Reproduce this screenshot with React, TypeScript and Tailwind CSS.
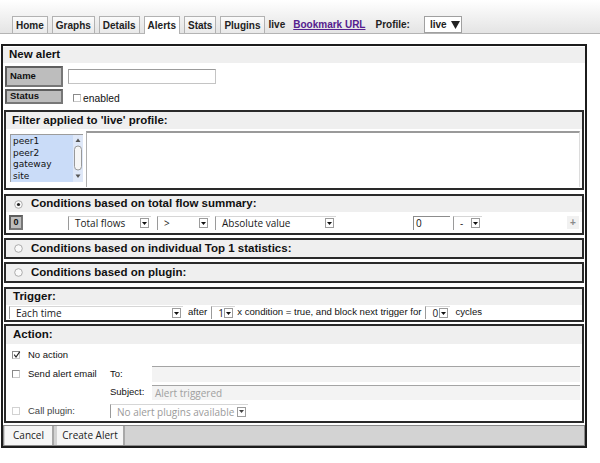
import clsx from 'clsx'
import type { ReactNode } from 'react'

// small control font (Lucida Grande look-alike)
const ctrl = "font-['Open_Sans',sans-serif] text-[10px]"

function Arrow({ disabled }: { disabled?: boolean }) {
  return (
    <span className="flex h-[10px] w-[9px] shrink-0 items-center justify-center border border-[#9c9c9c] bg-white">
      <svg width="5" height="3" viewBox="0 0 5 3">
        <path d="M0 0h5L2.5 3z" fill={disabled ? '#444' : '#111'} />
      </svg>
    </span>
  )
}

function Select({ className, children, disabled }: { className: string; children: ReactNode; disabled?: boolean }) {
  return (
    <div
      className={clsx(
        'flex shrink-0 items-center border-l border-t border-l-[#9a9a9a] border-t-[#d6d6d6] bg-white pl-[6px] pr-[2px]',
        ctrl,
        disabled ? 'text-[#9a9a9a]' : 'text-[#1a1a1a]',
        className,
      )}
    >
      <span className="flex-1 whitespace-nowrap leading-[12px]">{children}</span>
      <Arrow disabled={disabled} />
    </div>
  )
}

function Check({ checked, disabled }: { checked?: boolean; disabled?: boolean }) {
  return (
    <span
      className={clsx(
        'relative block h-[8px] w-[8px] shrink-0 border bg-white',
        disabled ? 'border-[#d2d2d2]' : 'border-[#8a8a8a] border-r-[#c8c8c8] border-b-[#c8c8c8]',
      )}
    >
      {checked && (
        <svg className="absolute left-0 top-[-1px]" width="8" height="8" viewBox="0 0 8 8">
          <path d="M1.2 3.6 L3 6 L6.8 0.6" fill="none" stroke="#222" strokeWidth="1.1" />
        </svg>
      )}
    </span>
  )
}

function Radio({ checked }: { checked?: boolean }) {
  return (
    <svg width="9" height="9" viewBox="0 0 9 9" className="shrink-0">
      <circle cx="4.5" cy="4.5" r="3.8" fill="#fafafa" stroke="#a4a4a4" strokeWidth="0.9" />
      {checked && <circle cx="4.5" cy="4.5" r="1.6" fill="#222" />}
    </svg>
  )
}

function Box({ className, children }: { className: string; children: ReactNode }) {
  return <div className={clsx('mx-[1px] border-2 border-[#2a2a2a]', className)}>{children}</div>
}

function Head({ className, children }: { className?: string; children: ReactNode }) {
  return (
    <div className={clsx('flex items-center bg-[#efefef] text-[11.5px] font-bold leading-none text-[#111]', className)}>
      {children}
    </div>
  )
}

function Tab({ label, active }: { label: string; active?: boolean }) {
  return (
    <div
      className={clsx(
        'flex items-center border border-b-0 border-[#b2b2b2] px-[3px] text-[10px] font-bold text-[#222]',
        active ? '-mb-px h-[18px] bg-white' : 'h-[17px] bg-linear-to-b from-[#fbfbfb] to-[#e9e9e9]',
      )}
    >
      {label}
    </div>
  )
}

export default function App() {
  return (
    <div className="relative h-[463px] w-[600px] overflow-hidden bg-white font-['Liberation_Sans',Arial,sans-serif] text-[#111]">
      {/* nav */}
      <div className="flex h-[34px] items-end gap-[4px] border-b border-[#b4b4b4] bg-linear-to-b from-white to-[#e4e4e4] pl-[12px]">
        <Tab label="Home" />
        <Tab label="Graphs" />
        <Tab label="Details" />
        <Tab label="Alerts" active />
        <Tab label="Stats" />
        <Tab label="Plugins" />
        <div className="flex h-[17px] items-center text-[10px] font-bold text-[#222]">
          <span>live</span>
          <span className="ml-[8px] text-[#55208f] underline">Bookmark URL</span>
          <span className="ml-[10px]">Profile:</span>
        </div>
        <div className="ml-[10px] flex h-[17px] w-[38px] items-center gap-[4px] border border-[#a0a0a0] bg-white pl-[5px] text-[10px] font-bold text-[#222]">
          live
          <svg width="9" height="8" viewBox="0 0 9 8">
            <path d="M0 0h9L4.5 8z" fill="#222" />
          </svg>
        </div>
      </div>

      {/* form */}
      <div className="ml-px mt-[10px] flex w-[586px] flex-col border-2 border-[#1c1c1c]">
        <Head className="mt-px h-[16px] pl-[6px]">New alert</Head>

        <div className="mt-[3px] flex h-[21px] items-center">
          <div className="ml-[2px] flex h-full w-[58px] items-center border-2 border-[#5e5e5e] border-b-[#777] border-r-[#777] bg-[#bdbdbd] pl-[3px] text-[9.5px] font-bold">
            Name
          </div>
          <div className="ml-[5px] h-[15px] w-[148px] border border-[#c4c4c4] border-l-[#a6a6a6] border-t-[#9c9c9c] bg-white" />
        </div>

        <div className="mt-[2px] flex h-[15px] items-center">
          <div className="ml-[2px] flex h-full w-[58px] items-center border-2 border-[#5e5e5e] border-b-[#777] border-r-[#777] bg-[#bdbdbd] pl-[3px] text-[9.5px] font-bold">
            Status
          </div>
          <span className="ml-[10px] mt-[3px]">
            <Check />
          </span>
          <span className="ml-[2px] mt-[4px] text-[10.3px]">enabled</span>
        </div>

        {/* filter */}
        <Box className="mt-[6px]">
          <Head className="h-[17px] pl-[6px]">Filter applied to 'live' profile:</Head>
          <div className="flex items-start gap-[3px] pb-px pl-[4px] pr-[2px] pt-[2px]">
            <div className="mt-[3px] flex h-[48px] w-[73px] border-l border-t border-[#9c9c9c] bg-[#cadcf8]">
              <div className="flex-1 pl-[2px] pt-[1px] font-['DejaVu_Sans',sans-serif] text-[9px] leading-[11.7px] text-[#111]">
                <div>peer1</div>
                <div>peer2</div>
                <div>gateway</div>
                <div>site</div>
              </div>
              <svg width="10" height="47" viewBox="0 0 10 47" className="shrink-0">
                <rect x="0" y="0" width="10" height="47" fill="#dfe8f8" />
                <path d="M5 3.5 L7.5 7 H2.5z" fill="#555" />
                <rect x="1.5" y="11" width="7" height="24" rx="3.5" fill="#f6f6f6" stroke="#8e8e8e" strokeWidth="0.9" />
                <path d="M5 43 L7.5 39.5 H2.5z" fill="#555" />
              </svg>
            </div>
            <div className="h-[56px] flex-1 border-l border-r border-t-2 border-l-[#b0b0b0] border-r-[#dcdcdc] border-t-[#9a9a9a] bg-white" />
          </div>
        </Box>

        {/* conditions total */}
        <Box className="mt-[4px]">
          <Head className="h-[16px] gap-[8px] pl-[8px]">
            <Radio checked />
            Conditions based on total flow summary:
          </Head>
          <div className="flex h-[21px] items-center">
            <div className="ml-[3px] flex h-[15px] w-[14px] items-center justify-center border-2 border-[#5e5e5e] border-b-[#777] border-r-[#777] bg-[#bdbdbd] text-[9px] font-bold">
              0
            </div>
            <Select className="ml-[45px] h-[14px] w-[83px]">Total flows</Select>
            <Select className="ml-[6px] h-[14px] w-[53px]">&gt;</Select>
            <Select className="ml-[5px] h-[14px] w-[121px]">Absolute value</Select>
            <div className={clsx('ml-[77px] flex h-[14px] w-[37px] items-center border-l border-t border-l-[#8c8c8c] border-t-[#8c8c8c] bg-white pl-[2px] leading-[12px]', ctrl)}>
              0
            </div>
            <Select className="ml-[3px] h-[14px] w-[29px]">-</Select>
            <div className="ml-auto mr-[3px] flex h-[13px] w-[12px] items-center justify-center bg-[#f1f1f1] text-[10px] font-bold leading-none text-[#8a8a8a]">
              +
            </div>
          </div>
        </Box>

        <Box className="mt-[3px]">
          <Head className="h-[17px] gap-[8px] pl-[8px]">
            <Radio />
            Conditions based on individual Top 1 statistics:
          </Head>
        </Box>

        <Box className="mt-[3px]">
          <Head className="h-[17px] gap-[8px] pl-[8px]">
            <Radio />
            Conditions based on plugin:
          </Head>
        </Box>

        {/* trigger */}
        <Box className="mt-[4px]">
          <Head className="h-[16px] pl-[7px]">Trigger:</Head>
          <div className="flex h-[15px] items-center text-[9.6px]">
            <Select className="ml-[3px] h-[13px] w-[174px]">Each time</Select>
            <span className="ml-[5px]">after</span>
            <Select className="ml-[4px] h-[13px] w-[24px]">1</Select>
            <span className="ml-[2px]">x condition = true, and block next trigger for</span>
            <Select className="ml-[4px] h-[13px] w-[25px]">0</Select>
            <span className="ml-[5px]">cycles</span>
          </div>
        </Box>

        {/* action */}
        <Box className="mt-[2px]">
          <Head className="h-[18px] pl-[7px]">Action:</Head>
          <div className="flex flex-col pb-[3px] text-[9.5px]">
            <div className="flex h-[22px] items-center pl-[6px]">
              <Check checked />
              <span className="ml-[8px]">No action</span>
            </div>
            <div className="flex h-[16px] items-center pl-[6px]">
              <div className="flex w-[98px] items-center">
                <Check />
                <span className="ml-[8px]">Send alert email</span>
              </div>
              <span className="w-[42px]">To:</span>
              <div className="mr-[2px] h-full flex-1 border-t border-[#a4a4a4] bg-[#f3f3f3]" />
            </div>
            <div className="mt-[3px] flex h-[15px] items-center pl-[6px]">
              <div className="w-[98px]" />
              <span className="w-[42px]">Subject:</span>
              <div className={clsx('mr-[2px] flex h-full flex-1 items-center border-t border-[#a4a4a4] bg-[#f3f3f3] pl-[3px] leading-[12px] text-[#a0a0a0]', ctrl)}>
                Alert triggered
              </div>
            </div>
            <div className="mt-[4px] flex h-[14px] items-center pl-[6px]">
              <div className="flex w-[98px] items-center">
                <Check disabled />
                <span className="ml-[8px] text-[#444]">Call plugin:</span>
              </div>
              <Select disabled className="h-[14px] w-[138px]">
                No alert plugins available
              </Select>
            </div>
          </div>
        </Box>

        {/* buttons */}
        <div className="mt-[2px] flex h-[21px] items-stretch gap-[3px] border border-[#8a8a8a] bg-[#d3d3d3] pl-px">
          <div className={clsx('flex w-[49px] items-center justify-center border-r-2 border-[#a8a8a8] bg-[#f6f6f6] text-[#222]', ctrl)}>
            Cancel
          </div>
          <div className={clsx('flex w-[68px] items-center justify-center border-r-2 border-[#a8a8a8] bg-[#f6f6f6] text-[#222]', ctrl)}>
            Create Alert
          </div>
        </div>
      </div>
    </div>
  )
}
